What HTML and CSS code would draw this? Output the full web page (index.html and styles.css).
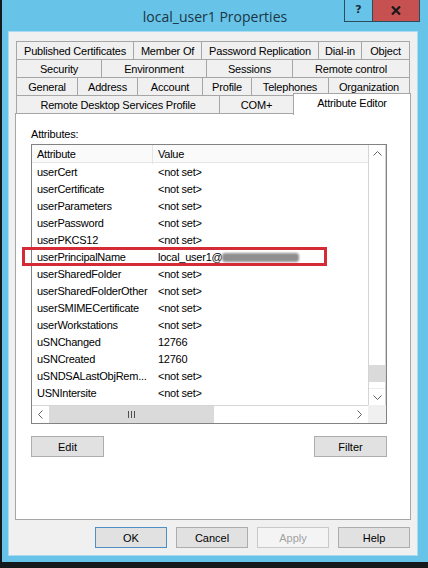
FILE: index.html
```html
<!DOCTYPE html>
<html>
<head>
<meta charset="utf-8">
<title>local_user1 Properties</title>
<link rel="stylesheet" href="styles.css">
</head>
<body>
<div class="window">
  <div class="titlebar">
    <div class="title">local_user1 Properties</div>
    <div class="controls">
      <div class="btn-help">?</div>
      <div class="btn-close">
        <svg width="10" height="9" viewBox="0 0 10 9"><path d="M1 0.5 L9 8.5 M9 0.5 L1 8.5" stroke="#1a1a1a" stroke-width="2.2" fill="none"/></svg>
      </div>
    </div>
  </div>
  <div class="client">
    <div class="tabs">
      <div class="tabrow row1">
        <div class="tab">Published Certificates</div>
        <div class="tab">Member Of</div>
        <div class="tab">Password Replication</div>
        <div class="tab">Dial-in</div>
        <div class="tab last">Object</div>
      </div>
      <div class="tabrow row2">
        <div class="tab">Security</div>
        <div class="tab">Environment</div>
        <div class="tab">Sessions</div>
        <div class="tab last">Remote control</div>
      </div>
      <div class="tabrow row3">
        <div class="tab">General</div>
        <div class="tab">Address</div>
        <div class="tab">Account</div>
        <div class="tab">Profile</div>
        <div class="tab">Telephones</div>
        <div class="tab last">Organization</div>
      </div>
      <div class="tabrow row4">
        <div class="tab">Remote Desktop Services Profile</div>
        <div class="tab">COM+</div>
        <div class="tab last selected">Attribute Editor</div>
      </div>
    </div>
    <div class="panel">
      <div class="label">Attributes:</div>
      <div class="listbox">
        <div class="listview">
          <div class="lv-header"><div class="c-attr">Attribute</div><div class="c-val">Value</div></div>
          <div class="lv-row"><div class="c-attr">userCert</div><div class="c-val">&lt;not set&gt;</div></div>
          <div class="lv-row"><div class="c-attr">userCertificate</div><div class="c-val">&lt;not set&gt;</div></div>
          <div class="lv-row"><div class="c-attr">userParameters</div><div class="c-val">&lt;not set&gt;</div></div>
          <div class="lv-row"><div class="c-attr">userPassword</div><div class="c-val">&lt;not set&gt;</div></div>
          <div class="lv-row"><div class="c-attr">userPKCS12</div><div class="c-val">&lt;not set&gt;</div></div>
          <div class="lv-row"><div class="c-attr">userPrincipalName</div><div class="c-val">local_user1@<span class="redact"></span></div></div>
          <div class="lv-row"><div class="c-attr">userSharedFolder</div><div class="c-val">&lt;not set&gt;</div></div>
          <div class="lv-row"><div class="c-attr">userSharedFolderOther</div><div class="c-val">&lt;not set&gt;</div></div>
          <div class="lv-row"><div class="c-attr">userSMIMECertificate</div><div class="c-val">&lt;not set&gt;</div></div>
          <div class="lv-row"><div class="c-attr">userWorkstations</div><div class="c-val">&lt;not set&gt;</div></div>
          <div class="lv-row"><div class="c-attr">uSNChanged</div><div class="c-val">12766</div></div>
          <div class="lv-row"><div class="c-attr">uSNCreated</div><div class="c-val">12760</div></div>
          <div class="lv-row"><div class="c-attr">uSNDSALastObjRem...</div><div class="c-val">&lt;not set&gt;</div></div>
          <div class="lv-row"><div class="c-attr">USNIntersite</div><div class="c-val">&lt;not set&gt;</div></div>
        </div>
        <div class="vscroll">
          <div class="arrow up"><svg width="9" height="5" viewBox="0 0 9 5"><path d="M0.5 4.5 L4.5 0.5 L8.5 4.5" stroke="#606060" fill="none"/></svg></div>
          <div class="vtrack"><div class="vthumb"></div></div>
          <div class="arrow down"><svg width="9" height="5" viewBox="0 0 9 5"><path d="M0.5 0.5 L4.5 4.5 L8.5 0.5" stroke="#606060" fill="none"/></svg></div>
        </div>
        <div class="hscroll">
          <div class="harrow"><svg width="5" height="9" viewBox="0 0 5 9"><path d="M4.5 0.5 L0.5 4.5 L4.5 8.5" stroke="#606060" fill="none"/></svg></div>
          <div class="hthumb"><svg width="7" height="7" viewBox="0 0 7 7"><path d="M0.5 0 V7 M3.5 0 V7 M6.5 0 V7" stroke="#505050" fill="none"/></svg></div>
          <div class="htrack"></div>
          <div class="harrow"><svg width="5" height="9" viewBox="0 0 5 9"><path d="M0.5 0.5 L4.5 4.5 L0.5 8.5" stroke="#606060" fill="none"/></svg></div>
        </div>
        <div class="corner"></div>
      </div>
      <div class="panel-buttons">
        <div class="btn">Edit</div>
        <div class="btn">Filter</div>
      </div>
    </div>
    <div class="dialog-buttons">
      <div class="btn default">OK</div>
      <div class="btn">Cancel</div>
      <div class="btn disabled">Apply</div>
      <div class="btn">Help</div>
    </div>
    <div class="highlight"></div>
  </div>
</div>
</body>
</html>
```

FILE: styles.css
```css
html, body {
  margin: 0;
  padding: 0;
}

body {
  width: 428px;
  height: 568px;
  overflow: hidden;
  background: #14191c;
  font-family: "Liberation Sans", Arial, sans-serif;
  font-size: 11px;
  color: #000;
}

.window {
  margin-left: 2px;
  width: 426px;
  height: 562px;
  background: #67c4e8;
  display: flex;
  flex-direction: column;
}

.titlebar {
  height: 32px;
  flex: none;
  display: grid;
  grid-template-columns: 1fr auto 1fr;
}

.title {
  grid-column: 2;
  font-family: "Open Sans", sans-serif;
  font-size: 14px;
  line-height: 34px;
  color: #1c3443;
  white-space: nowrap;
}

.controls {
  grid-column: 3;
  justify-self: end;
  align-self: start;
  margin-right: 8px;
  display: flex;
  height: 22px;
}

.btn-help {
  width: 27px;
  height: 21px;
  border: 1px solid #2a4d5e;
  border-top: 0;
  border-right: 0;
  font-family: "DejaVu Sans", sans-serif;
  font-weight: bold;
  font-size: 11px;
  line-height: 20px;
  text-align: center;
  color: #1a2a33;
}

.btn-close {
  width: 46px;
  height: 21px;
  background: #c75050;
  border: 1px solid #2a4d5e;
  border-top: 0;
  display: flex;
  align-items: center;
  justify-content: center;
}

.client {
  margin: 0 11px 0 7px;
  height: 523px;
  box-sizing: border-box;
  padding: 9px 6px 7px;
  background: #f0f0f0;
  box-shadow: 0 0 0 1px #a9dcf1;
  position: relative;
  display: flex;
  flex-direction: column;
}

.tabs {
  margin: 0 1px;
  display: flex;
  flex-direction: column;
}

.tabrow {
  display: grid;
  height: 18px;
}

.row1 { grid-template-columns: 117px 68px 117px 43px 1fr; }
.row2 { grid-template-columns: 85px 105px 86px 1fr; }
.row3 { grid-template-columns: 61px 60px 65px 49px 77px 1fr; }
.row4 { grid-template-columns: 203px 74px 1fr; }

.tab {
  border-left: 1px solid #a6a6a6;
  border-top: 1px solid #a6a6a6;
  background: #f0f0f0;
  text-align: center;
  line-height: 18px;
  white-space: nowrap;
  letter-spacing: -0.2px;
}

.tab.last {
  border-right: 1px solid #a6a6a6;
}

.tab.selected {
  background: #fff;
  margin-top: -2px;
  margin-right: -1px;
  margin-bottom: -1px;
  line-height: 19px;
  z-index: 1;
}

.panel {
  height: 407px;
  box-sizing: border-box;
  border: 1px solid #a6a6a6;
  background: #fff;
  padding: 14px 0 0 15px;
}

.label {
  line-height: 13px;
  height: 13px;
  margin-bottom: 3px;
  letter-spacing: -0.2px;
}

.listbox {
  width: 356px;
  height: 280px;
  box-sizing: border-box;
  border: 1px solid #828282;
  display: grid;
  grid-template-columns: 1fr 18px;
  grid-template-rows: 1fr 18px;
}

.listview {
  overflow: hidden;
  letter-spacing: -0.25px;
}

.lv-header {
  display: grid;
  grid-template-columns: 121px 1fr;
  height: 18px;
  box-sizing: border-box;
  border-bottom: 1px solid #e5e5e5;
  background: #fafafa;
  line-height: 19px;
}

.lv-header .c-attr {
  border-right: 1px solid #e5e5e5;
}

.lv-row {
  display: grid;
  grid-template-columns: 121px 1fr;
  height: 17px;
  box-sizing: border-box;
  padding-top: 1px;
  line-height: 17px;
}

.c-attr {
  padding-left: 5px;
  white-space: nowrap;
  overflow: hidden;
}

.c-val {
  padding-left: 5px;
  white-space: nowrap;
}

.redact {
  display: inline-block;
  width: 77px;
  height: 9px;
  vertical-align: -1px;
  background: #8f8f8f;
  border-radius: 3px;
  filter: blur(1px);
}

.vscroll {
  border-left: 1px solid #d4d4d4;
  border-right: 1px solid #d4d4d4;
  display: flex;
  flex-direction: column;
}

.arrow {
  height: 17px;
  flex: none;
  display: flex;
  align-items: center;
  justify-content: center;
}

.arrow.down {
  border-top: 1px solid #ececec;
  height: 16px;
}

.vtrack {
  flex: 1;
  display: flex;
  flex-direction: column;
  justify-content: flex-end;
  padding-bottom: 6px;
}

.vthumb {
  height: 17px;
  background: #dadada;
}

.hscroll {
  border-top: 1px solid #d4d4d4;
  display: flex;
}

.harrow {
  width: 17px;
  flex: none;
  display: flex;
  align-items: center;
  justify-content: center;
}

.hthumb {
  width: 165px;
  flex: none;
  background: #dadada;
  display: flex;
  align-items: center;
  justify-content: center;
}

.htrack {
  flex: 1;
}

.corner {
  background: #f0f0f0;
}

.panel-buttons {
  width: 356px;
  margin-top: 12px;
  display: flex;
  justify-content: space-between;
}

.btn {
  width: 73px;
  height: 21px;
  box-sizing: border-box;
  border: 1px solid #adadad;
  background: #e1e1e1;
  text-align: center;
  line-height: 20px;
  font-size: 11px;
}

.dialog-buttons {
  margin-top: 7px;
  display: flex;
  justify-content: flex-end;
  gap: 9px;
  padding-right: 1px;
}

.dialog-buttons .btn {
  width: 72px;
}

.btn.default {
  border-color: #4f8fc4;
}

.btn.disabled {
  background: #f4f4f4;
  border-color: #c9c9c9;
  color: #a3a3a3;
}

.highlight {
  position: absolute;
  left: 13px;
  top: 215px;
  width: 305px;
  height: 19px;
  box-sizing: border-box;
  border: 3px solid #d52b36;
}
```
